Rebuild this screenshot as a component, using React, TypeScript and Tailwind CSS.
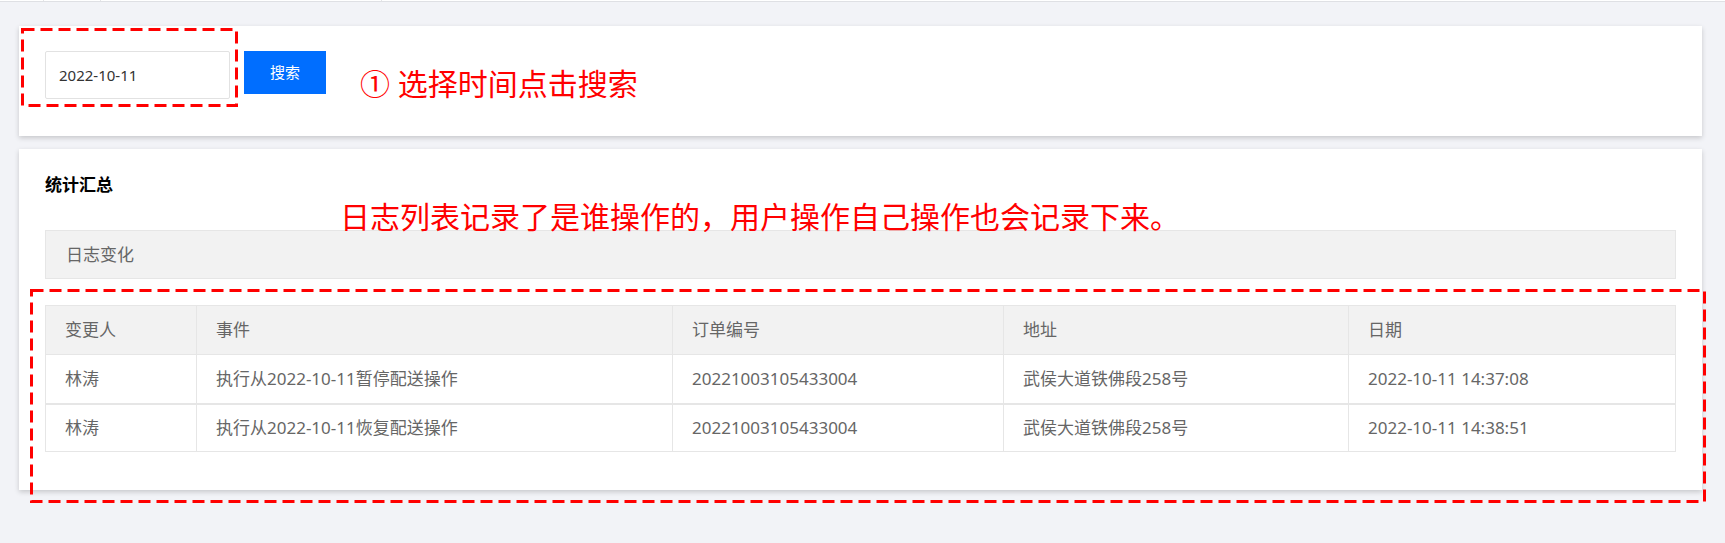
import React from "react";

interface LogRow {
  user: string;
  event: string;
  orderNo: string;
  address: string;
  date: string;
}

const rows: LogRow[] = [
  {
    user: "林涛",
    event: "执行从2022-10-11暂停配送操作",
    orderNo: "20221003105433004",
    address: "武侯大道铁佛段258号",
    date: "2022-10-11 14:37:08",
  },
  {
    user: "林涛",
    event: "执行从2022-10-11恢复配送操作",
    orderNo: "20221003105433004",
    address: "武侯大道铁佛段258号",
    date: "2022-10-11 14:38:51",
  },
];

const headers = ["变更人", "事件", "订单编号", "地址", "日期"];

// red dashed annotation frame drawn on top of the page
const DashedFrame: React.FC<{ className: string }> = ({ className }) => (
  <svg className={`pointer-events-none absolute ${className}`}>
    <rect
      x="1.5"
      y="1.5"
      width="calc(100% - 3px)"
      height="calc(100% - 3px)"
      fill="none"
      stroke="#ff0000"
      strokeWidth="3"
      strokeDasharray="12 6"
    />
  </svg>
);

const App: React.FC = () => {
  return (
    <div className="relative min-h-screen bg-[#f2f3f7] font-['Noto_Sans','Noto_Sans_CJK_SC',sans-serif]">
      {/* top tab strip edge */}
      <div className="flex h-px bg-white">
        <div className="ml-[43px] w-[58px] border-x border-[#e4e5e8]" />
        <div className="ml-[140px] w-[141px] border-r border-[#e4e5e8]" />
      </div>
      <div className="h-px bg-[#dfe0e4]" />

      <div className="pl-[19px] pr-[23px]">
        {/* SEARCH CARD */}
        <div className="mt-[24px] flex h-[110px] items-start bg-white px-[26px] pt-[25px] shadow-[0_2px_5px_rgba(0,0,0,0.18)]">
          <input
            readOnly
            value="2022-10-11"
            className="h-[48px] w-[185px] rounded-[2px] border border-[#e2e2e2] pl-[13px] text-[15px] text-[#333] outline-none"
          />
          <button className="ml-[14px] h-[43px] w-[82px] bg-[#006eff] text-[15px] text-white">
            搜索
          </button>
          <span className="ml-[34px] mt-[10px] text-[30px] text-[#ff0000]">
            ① 选择时间点击搜索
          </span>
        </div>

        {/* LOG CARD */}
        <div className="mt-[13px] bg-white px-[26px] pb-[38px] pt-[24px] shadow-[0_2px_5px_rgba(0,0,0,0.18)]">
          <h2 className="text-[17px] font-bold leading-[24px] text-black">统计汇总</h2>

          <div className="mt-[33px] flex h-[49px] items-center border border-[#e6e6e6] bg-[#f2f2f2] pl-[20px] text-[17px] text-[#666]">
            日志变化
          </div>

          <table className="mt-[26px] w-full table-fixed border-collapse text-[17px] text-[#666]">
            <colgroup>
              <col className="w-[151px]" />
              <col className="w-[476px]" />
              <col className="w-[331px]" />
              <col className="w-[345px]" />
              <col />
            </colgroup>
            <thead>
              <tr className="h-[49px] bg-[#f2f2f2]">
                {headers.map((h) => (
                  <th key={h} className="border border-[#e6e6e6] pl-[19px] text-left font-normal">
                    {h}
                  </th>
                ))}
              </tr>
            </thead>
            <tbody>
              {rows.map((r, i) => (
                <tr key={r.date} className={i > 0 ? "h-[48px] border-t-2 border-[#e6e6e6]" : "h-[49px]"}>
                  <td className="border border-[#e6e6e6] pl-[19px]">{r.user}</td>
                  <td className="border border-[#e6e6e6] pl-[19px]">{r.event}</td>
                  <td className="border border-[#e6e6e6] pl-[19px]">{r.orderNo}</td>
                  <td className="border border-[#e6e6e6] pl-[19px]">{r.address}</td>
                  <td className="border border-[#e6e6e6] pl-[19px]">{r.date}</td>
                </tr>
              ))}
            </tbody>
          </table>
        </div>
      </div>

      {/* ANNOTATIONS */}
      <DashedFrame className="left-[21px] top-[28px] h-[79px] w-[217px]" />
      <DashedFrame className="left-[30px] top-[289px] h-[214px] w-[1676px]" />
      <span className="absolute left-[340px] top-[194px] text-[30px] text-[#ff0000]">
        日志列表记录了是谁操作的，用户操作自己操作也会记录下来。
      </span>
    </div>
  );
};

export default App;
